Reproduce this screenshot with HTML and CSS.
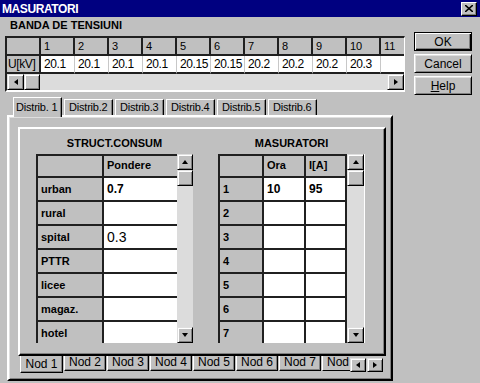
FILE: index.html
```html
<!DOCTYPE html>
<html lang="ro">
<head>
    <meta charset="UTF-8">
    <title>MASURATORI</title>
    <link rel="stylesheet" href="styles.css">
</head>
<body>
<div class="window">
    <div class="titlebar">
        <span class="title">MASURATORI</span>
        <span class="close">
            <svg width="8" height="7" viewBox="0 0 8 7"><path d="M0 0L8 7M8 0L0 7" stroke="#000" stroke-width="1.6"/></svg>
        </span>
    </div>

    <div class="top">
        <div class="banda">
            <div class="label">BANDA DE TENSIUNI</div>
            <div class="hgrid">
                <div class="hrow head">
                    <div class="fix"></div>
                    <div>1</div><div>2</div><div>3</div><div>4</div><div>5</div><div>6</div>
                    <div>7</div><div>8</div><div>9</div><div>10</div><div>11</div>
                </div>
                <div class="hrow data">
                    <div class="fix">U[kV]</div>
                    <div>20.1</div><div>20.1</div><div>20.1</div><div>20.1</div><div>20.15</div><div>20.15</div>
                    <div>20.2</div><div>20.2</div><div>20.2</div><div>20.3</div><div></div>
                </div>
                <div class="hscroll">
                    <span class="sbtn"><i class="tri left"></i></span>
                    <span class="sbtn thumb"></span>
                    <span class="track"></span>
                    <span class="sbtn"><i class="tri right"></i></span>
                </div>
            </div>
        </div>
        <div class="buttons">
            <button class="btn default">OK</button>
            <button class="btn">Cancel</button>
            <button class="btn"><u>H</u>elp</button>
        </div>
    </div>

    <div class="distrib">
        <div class="dtabs">
            <div class="dtab active">Distrib. 1</div>
            <div class="dtab">Distrib.2</div>
            <div class="dtab">Distrib.3</div>
            <div class="dtab">Distrib.4</div>
            <div class="dtab">Distrib.5</div>
            <div class="dtab">Distrib.6</div>
        </div>
        <div class="dpanel">
            <div class="nod">
                <div class="gbox struct">
                    <div class="gtitle">STRUCT.CONSUM</div>
                    <div class="vgrid">
                        <div class="cells">
                            <div class="grow head"><div class="c1 fixc"></div><div class="c2 fixc">Pondere</div></div>
                            <div class="grow"><div class="c1 fixc">urban</div><div class="c2 val">0.7</div></div>
                            <div class="grow"><div class="c1 fixc">rural</div><div class="c2 val"></div></div>
                            <div class="grow"><div class="c1 fixc">spital</div><div class="c2 val"><span class="plain">0.3</span></div></div>
                            <div class="grow"><div class="c1 fixc">PTTR</div><div class="c2 val"></div></div>
                            <div class="grow"><div class="c1 fixc">licee</div><div class="c2 val"></div></div>
                            <div class="grow"><div class="c1 fixc">magaz.</div><div class="c2 val"></div></div>
                            <div class="grow"><div class="c1 fixc">hotel</div><div class="c2 val"></div></div>
                        </div>
                        <div class="vscroll">
                            <span class="sbtn"><i class="tri up"></i></span>
                            <span class="sbtn vthumb"></span>
                            <span class="track"></span>
                            <span class="sbtn"><i class="tri down"></i></span>
                        </div>
                    </div>
                </div>

                <div class="gbox mas">
                    <div class="gtitle">MASURATORI</div>
                    <div class="vgrid">
                        <div class="cells">
                            <div class="grow head"><div class="m1 fixc"></div><div class="m2 fixc">Ora</div><div class="m3 fixc">I[A]</div></div>
                            <div class="grow"><div class="m1 fixc">1</div><div class="m2 val">10</div><div class="m3 val">95</div></div>
                            <div class="grow"><div class="m1 fixc">2</div><div class="m2 val"></div><div class="m3 val"></div></div>
                            <div class="grow"><div class="m1 fixc">3</div><div class="m2 val"></div><div class="m3 val"></div></div>
                            <div class="grow"><div class="m1 fixc">4</div><div class="m2 val"></div><div class="m3 val"></div></div>
                            <div class="grow"><div class="m1 fixc">5</div><div class="m2 val"></div><div class="m3 val"></div></div>
                            <div class="grow"><div class="m1 fixc">6</div><div class="m2 val"></div><div class="m3 val"></div></div>
                            <div class="grow"><div class="m1 fixc">7</div><div class="m2 val"></div><div class="m3 val"></div></div>
                        </div>
                        <div class="vscroll wide">
                            <span class="sbtn"><i class="tri up"></i></span>
                            <span class="sbtn vthumb"></span>
                            <span class="track"></span>
                            <span class="sbtn"><i class="tri down"></i></span>
                        </div>
                    </div>
                </div>
            </div>

            <div class="nodbar">
                <div class="ntabs">
                    <div class="ntab active">Nod 1</div>
                    <div class="ntab">Nod 2</div>
                    <div class="ntab">Nod 3</div>
                    <div class="ntab">Nod 4</div>
                    <div class="ntab">Nod 5</div>
                    <div class="ntab">Nod 6</div>
                    <div class="ntab">Nod 7</div>
                    <div class="ntab last">Nod</div>
                </div>
                <div class="narrows">
                    <span class="sbtn"><i class="tri left"></i></span>
                    <span class="sbtn"><i class="tri right"></i></span>
                </div>
            </div>
        </div>
    </div>
</div>
</body>
</html>
```

FILE: styles.css
```css
* {
    box-sizing: border-box;
}
body {
    margin: 0;
    background: #c0c0c0;
    font-family: "Liberation Sans", Arial, sans-serif;
    font-size: 11px;
    color: #000;
}
.window {
    width: 480px;
    height: 383px;
    overflow: hidden;
    background: #c0c0c0;
}

/* title bar */
.titlebar {
    height: 17px;
    background: #000080;
    color: #fff;
    display: flex;
    align-items: center;
    justify-content: space-between;
    padding: 0 3px 0 2px;
}
.title {
    font-weight: bold;
    font-size: 12px;
    letter-spacing: -0.4px;
}
.close {
    width: 16px;
    height: 14px;
    display: flex;
    align-items: center;
    justify-content: center;
    background: #c0c0c0;
    border: 1px solid;
    border-color: #fff #000 #000 #fff;
    box-shadow: inset -1px -1px #808080;
}

/* raised 3d bits */
.sbtn {
    display: flex;
    align-items: center;
    justify-content: center;
    background: #c0c0c0;
    border: 1px solid;
    border-color: #dfdfdf #000 #000 #dfdfdf;
    box-shadow: inset 1px 1px #fff, inset -1px -1px #808080;
}
.track {
    flex: 1;
    background: #dcdcdc;
}
.tri {
    width: 0;
    height: 0;
    border: 3px solid transparent;
}
.tri.left { border-right: 4px solid #000; border-left: none; }
.tri.right { border-left: 4px solid #000; border-right: none; }
.tri.up { border-bottom: 4px solid #000; border-top: none; }
.tri.down { border-top: 4px solid #000; border-bottom: none; }

/* top area */
.top {
    display: flex;
    align-items: flex-start;
}
.banda {
    margin-left: 5px;
    width: 400px;
}
.label {
    margin: 2px 0 4px 5px;
    font-weight: bold;
    line-height: 13px;
}
.hgrid {
    height: 56px;
    border-top: 2px solid #202020;
    border-left: 2px solid #202020;
    border-bottom: 2px solid #fff;
    border-right: 1px solid #fff;
    overflow: hidden;
}
.hrow {
    display: flex;
    height: 18px;
}
.hrow > div {
    flex: none;
    width: 34px;
    padding-left: 3px;
    border-right: 2px solid #202020;
    border-bottom: 2px solid #202020;
    white-space: nowrap;
    line-height: 16px;
}
.hrow.data > div {
    background: #fff;
    font-size: 12px;
    letter-spacing: -0.4px;
    border-right: 1px solid #c8c8c8;
}
.hrow.data > .fix {
    background: #c0c0c0;
    border-right: 2px solid #202020;
    padding-left: 1px;
}
.hscroll {
    display: flex;
    height: 16px;
}
.hscroll .sbtn {
    width: 17px;
}
.hscroll .thumb {
    width: 16px;
}

.buttons {
    margin-left: 9px;
    padding-top: 15px;
    width: 58px;
    display: flex;
    flex-direction: column;
    gap: 3px;
}
.btn {
    height: 19px;
    padding: 0;
    font-family: "Liberation Sans", Arial, sans-serif;
    font-size: 12px;
    color: #000;
    background: #c0c0c0;
    border: 1px solid;
    border-color: #fff #000 #000 #fff;
    box-shadow: inset 1px 1px #dfdfdf, inset -1px -1px #808080;
}
.btn.default {
    border-color: #000;
    box-shadow: inset 1px 1px #fff, inset -1px -1px #000, inset -2px -2px #808080;
}

/* distrib tabs */
.distrib {
    margin: 2px 0 0 7px;
    width: 386px;
}
.dtabs {
    display: flex;
    align-items: flex-end;
    gap: 2px;
    height: 18px;
    padding-left: 6px;
}
.dtab {
    width: 49px;
    height: 16px;
    padding-left: 4px;
    line-height: 14px;
    letter-spacing: -0.2px;
    white-space: nowrap;
    border: 1px solid;
    border-color: #fff #000 transparent #fff;
    border-bottom: none;
    box-shadow: inset -1px 0 #808080;
}
.dtab.active {
    height: 20px;
    margin-bottom: -2px;
    padding: 2px 0 0 2px;
    background: #c0c0c0;
    position: relative;
    z-index: 1;
}
.dpanel {
    height: 266px;
    padding: 10px 0 0 9px;
    border: 2px solid;
    border-color: #fff #000 #000 #fff;
    box-shadow: inset 1px 1px #dfdfdf, inset -1px -1px #808080;
}

/* nod panel */
.nod {
    width: 368px;
    height: 229px;
    padding: 8px 0 0 16px;
    display: flex;
    gap: 25px;
    border: 2px solid;
    border-color: #fff #000 #000 #fff;
    box-shadow: inset -1px -1px #808080;
}
.gbox {
    display: flex;
    flex-direction: column;
}
.gbox.struct { width: 157px; }
.gbox.mas { width: 147px; }
.gtitle {
    text-align: center;
    font-weight: bold;
    line-height: 13px;
    margin-bottom: 4px;
}
.vgrid {
    display: flex;
    height: 189px;
}
.cells {
    flex: 1;
    overflow: hidden;
    border-top: 2px solid #202020;
    border-left: 2px solid #202020;
}
.grow {
    display: flex;
    height: 24px;
}
.grow.head {
    height: 22px;
}
.grow > div {
    flex: none;
    display: flex;
    align-items: center;
    padding-left: 3px;
    font-weight: bold;
    border-right: 2px solid #202020;
    border-bottom: 2px solid #202020;
}
.grow.head > div {
    align-items: flex-start;
    padding-top: 3px;
}
.fixc { background: #c0c0c0; }
.val { background: #fff; font-size: 12px; }
.c1 { width: 66px; }
.c2 { width: 73px; border-right: none !important; }
.m1 { width: 44px; }
.m2 { width: 42px; }
.m3 { width: 41px; }
.plain {
    font-weight: normal;
    font-size: 14px;
}
.vscroll {
    width: 16px;
    display: flex;
    flex-direction: column;
}
.vscroll.wide {
    width: 18px;
    border-right: 1px solid #fff;
}
.vscroll .sbtn {
    height: 16px;
}

/* nod tabs at bottom */
.nodbar {
    display: flex;
    margin-left: 2px;
    height: 18px;
}
.ntabs {
    display: flex;
    gap: 1px;
    width: 330px;
    overflow: hidden;
    align-items: flex-start;
}
.ntab {
    flex: none;
    width: 42px;
    height: 15px;
    font-size: 12px;
    line-height: 13px;
    text-align: center;
    white-space: nowrap;
    border: 1px solid;
    border-color: transparent #000 #000 #fff;
    border-top: none;
    box-shadow: inset -1px -1px #808080;
}
.ntab.last {
    width: 28px;
    text-align: left;
    padding-left: 4px;
    border-right: none;
    box-shadow: none;
}
.ntab.active {
    width: 43px;
    height: 19px;
    margin-top: -2px;
    padding-top: 4px;
    line-height: 13px;
    background: #c0c0c0;
    position: relative;
    z-index: 1;
}
.narrows {
    display: flex;
    gap: 1px;
    padding-top: 2px;
}
.narrows .sbtn {
    width: 16px;
    height: 14px;
}
```
